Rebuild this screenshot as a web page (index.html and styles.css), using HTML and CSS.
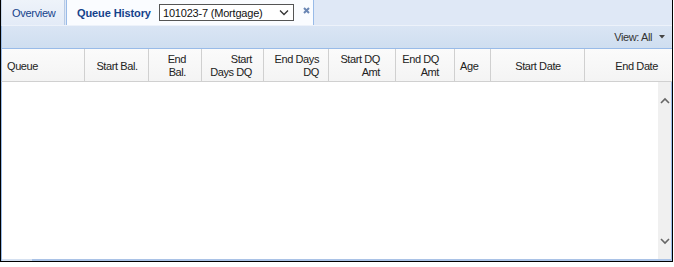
FILE: index.html
```html
<!DOCTYPE html>
<html lang="en">
<head>
    <meta charset="UTF-8">
    <title>Queue History</title>
    <link rel="stylesheet" href="styles.css">
</head>
<body>
    <div class="panel">
        <div class="tabStrip">
            <div class="tab">Overview</div>
            <div class="tab activeTab">
                <span class="tabTitle">Queue History</span>
                <div class="loanSelect">
                    <span>101023-7 (Mortgage)</span>
                    <svg width="10" height="6" viewBox="0 0 10 6"><path d="M1 0.5 L5 4.5 L9 0.5" fill="none" stroke="#333" stroke-width="1.3"/></svg>
                </div>
                <svg class="closeIcon" width="7" height="7" viewBox="0 0 7 7"><path d="M1 1 L6 6 M6 1 L1 6" stroke="#6a86b4" stroke-width="2"/></svg>
            </div>
        </div>
        <div class="toolbar">
            <span class="viewLabel">View: All</span>
            <svg width="6" height="4" viewBox="0 0 6 4"><path d="M0 0 H6 L3 3.5 Z" fill="#444"/></svg>
        </div>
        <div class="gridHeader">
            <div class="hd left">Queue</div>
            <div class="hd center">Start Bal.</div>
            <div class="hd right pr16">End<br>Bal.</div>
            <div class="hd right pr12">Start<br>Days DQ</div>
            <div class="hd right pr10">End Days<br>DQ</div>
            <div class="hd right pr16">Start DQ<br>Amt</div>
            <div class="hd right pr16">End DQ<br>Amt</div>
            <div class="hd left">Age</div>
            <div class="hd center">Start Date</div>
            <div class="hd right pr15">End Date</div>
        </div>
        <div class="gridBody">
            <div class="rows"></div>
            <div class="scrollbar">
                <svg width="10" height="7" viewBox="0 0 10 7"><path d="M1 6 L5 2 L9 6" fill="none" stroke="#666" stroke-width="1.6"/></svg>
                <svg width="10" height="7" viewBox="0 0 10 7"><path d="M1 1 L5 5 L9 1" fill="none" stroke="#666" stroke-width="1.6"/></svg>
            </div>
        </div>
        <div class="hScroll"><div class="hThumb"></div></div>
    </div>
</body>
</html>
```

FILE: styles.css
```css
body {
    margin: 0;
    background: #ffffff;
    font-family: "Liberation Sans", Arial, sans-serif;
    font-size: 11px;
    color: #222;
}

.panel {
    width: 673px;
    height: 262px;
    box-sizing: border-box;
    border: 1px solid #000;
    border-top: none;
    display: flex;
    flex-direction: column;
    background: #fff;
}

.tabStrip {
    height: 25px;
    display: flex;
    align-items: stretch;
    background: #dfe8f6;
    border-left: 1px solid #c5d5ea;
    box-sizing: border-box;
}

.tab {
    display: flex;
    align-items: center;
    white-space: nowrap;
    padding: 0 10px 0 10px;
    width: 63px;
    box-sizing: border-box;
    background: linear-gradient(#eef3fa, #e3ebf7);
    border-right: 1px solid #b8cbe6;
    color: #15428b;
    margin-right: 1px;
    letter-spacing: -0.3px;
}

.activeTab {
    width: 248px;
    padding-left: 10px;
    background: #fafcff;
    border-left: 1px solid #99bbe8;
    border-right: 1px solid #99bbe8;
    letter-spacing: normal;
}

.tabTitle {
    font-weight: bold;
    font-size: 11px;
    letter-spacing: -0.1px;
    width: 72px;
    flex-shrink: 0;
}

.loanSelect {
    flex-shrink: 0;
    margin-left: 10px;
    width: 135px;
    height: 17px;
    box-sizing: border-box;
    border: 1px solid #555;
    background: #fff;
    color: #111;
    display: flex;
    align-items: center;
    justify-content: space-between;
    padding: 0 4px 0 3px;
    letter-spacing: -0.2px;
}

.closeIcon {
    flex-shrink: 0;
    margin-left: 9px;
    margin-top: -4px;
}

.toolbar {
    height: 24px;
    box-sizing: border-box;
    background: linear-gradient(#dae5f4, #cfdef0);
    border-top: 1px solid #edf2fa;
    border-bottom: 1px solid #99bbe8;
    border-left: 1px solid #99bbe8;
    display: flex;
    align-items: center;
    justify-content: flex-end;
    padding-right: 7px;
    color: #333;
}

.viewLabel {
    margin-right: 7px;
    letter-spacing: -0.4px;
}

.gridHeader {
    height: 33px;
    box-sizing: border-box;
    display: grid;
    grid-template-columns: 83px 64px 53px 62px 65px 67px 59px 36px 94px 1fr;
    background: linear-gradient(#fbfbfb, #f4f4f4);
    border-bottom: 1px solid #d0d0d0;
    border-left: 1px solid #99bbe8;
}

.hd {
    display: flex;
    flex-direction: column;
    justify-content: center;
    white-space: nowrap;
    border-right: 1px solid #d0d0d0;
    line-height: 13px;
    color: #222;
    letter-spacing: -0.4px;
    padding: 2px 4px 0 5px;
}

.hd:last-child {
    border-right: none;
}

.left {
    text-align: left;
}

.center {
    text-align: center;
}

.right {
    text-align: right;
}

.pr10 { padding-right: 9px; }
.pr12 { padding-right: 11px; }
.pr15 { padding-right: 14px; }
.pr16 { padding-right: 15px; }

.gridBody {
    flex: 1;
    display: flex;
    border-left: 1px solid #99bbe8;
}

.rows {
    flex: 1;
    background: #fff;
}

.scrollbar {
    width: 13px;
    background: #f0f0f0;
    display: flex;
    flex-direction: column;
    justify-content: space-between;
    align-items: center;
    padding: 15px 0 14px 0;
    border-right: 1px solid #99bbe8;
}

.hScroll {
    height: 2px;
    background: #a9c2e6;
    border-left: 1px solid #99bbe8;
    display: flex;
}

.hThumb {
    width: 30px;
    background: #d4e0f0;
}
```
